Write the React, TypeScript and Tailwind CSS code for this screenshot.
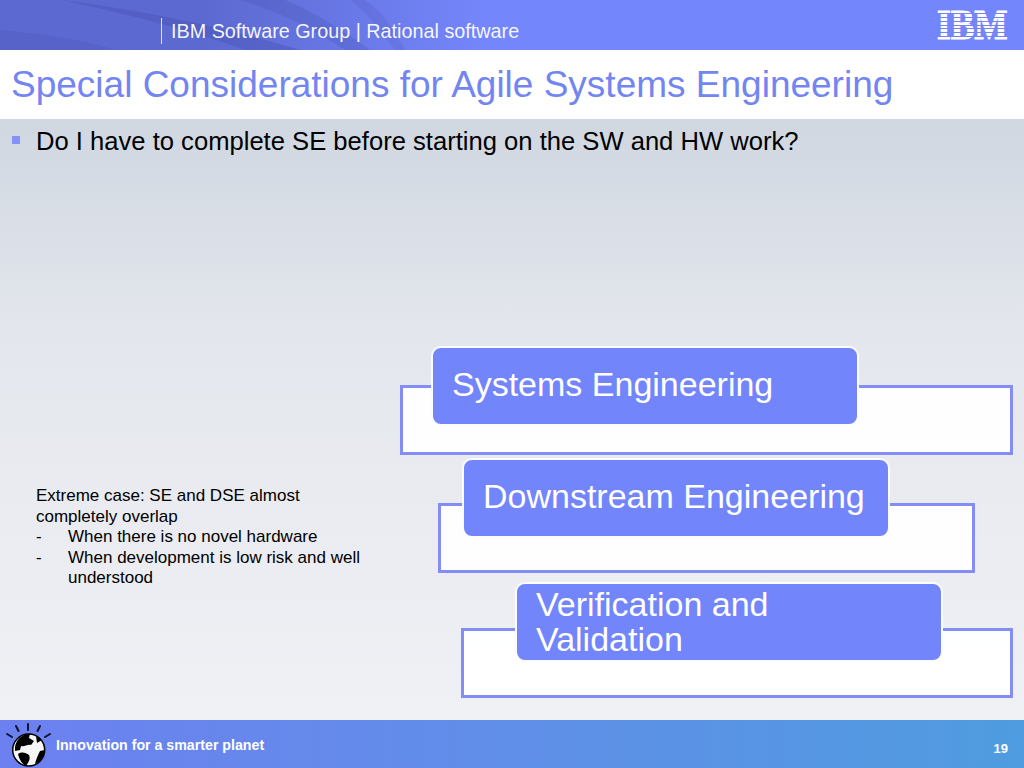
import React from "react";

const Section = ({ className, boxClassName, children }: { className: string; boxClassName: string; children: React.ReactNode }) => (
  <div className={`absolute ${className}`}>
    <div className={`absolute bg-white/95 border-[3px] border-[#838df5] ${boxClassName}`}></div>
    <div className="absolute left-0 top-0 w-[428px] h-[80px] rounded-[10px] border-[2px] border-[#fbfcfe] bg-[#7385fb] flex items-center pl-[19px] text-[34px] leading-[35px] text-white">
      {children}
    </div>
  </div>
);

const Globe = () => (
  <svg width="52" height="48" viewBox="0 0 52 48" className="absolute left-0 top-0">
    <g stroke="#0c1230" strokeWidth="2" strokeLinecap="round">
      <line x1="28" y1="4" x2="28" y2="10" />
      <line x1="16" y1="6" x2="18.5" y2="11" />
      <line x1="40" y1="6" x2="37.5" y2="11" />
      <line x1="7" y1="14" x2="12" y2="17" />
      <line x1="50" y1="14" x2="45" y2="17" />
    </g>
    <circle cx="28.7" cy="30" r="16" fill="#f6f6f6" stroke="#000" strokeWidth="1.5" />
    <path d="M15 27C16 20 22 14 30 13.5L29 18L34 21L31 25C27 24 25 27 21 26L20 30L15 31Z" fill="#000" />
    <path d="M18 34C22 31 26 33 29 35C31 39 28 43 26 46C22 44 19 39 18 34Z" fill="#000" />
    <path d="M36 16L42 20L37 23Z" fill="#000" />
    <path d="M40 31L45 30C44 37 40 42 35 44C36 39 38 35 40 31Z" fill="#000" />
  </svg>
);

const IbmLogo = () => (
  <div className="relative w-[70px] h-[30px] font-['Liberation_Serif',serif] font-bold text-white text-[43px] leading-[30px] whitespace-nowrap [-webkit-text-stroke:1px_white]">
    <span className="inline-block origin-left scale-x-[0.82]">IBM</span>
    <div className="absolute inset-0 flex flex-col justify-evenly">
      {[0, 1, 2, 3, 4, 5, 6].map((i) => (
        <div key={i} className="h-px bg-[#7385f5]"></div>
      ))}
    </div>
  </div>
);

export default function App() {
  return (
    <div className="w-[1024px] h-[768px] overflow-hidden flex flex-col font-['Liberation_Sans',Arial,sans-serif]">
      <header className="relative h-[50px] shrink-0 bg-gradient-to-r from-[#5c69d0] from-[20%] to-[#7486fb] to-[47%]">
        <svg width="480" height="50" viewBox="0 0 480 50" className="absolute left-0 top-0">
          <path d="M60 0C130 8 230 28 300 50L245 50C190 30 120 12 60 0Z" fill="#4a55b4" fillOpacity="0.45" />
          <path d="M240 0C270 8 315 30 345 50L370 50C340 28 310 10 285 0Z" fill="#4a55b4" fillOpacity="0.3" />
          <path d="M350 0C365 10 380 30 395 50L405 50C395 30 380 10 365 0Z" fill="#4a55b4" fillOpacity="0.2" />
          <path d="M0 30C50 34 90 42 115 50L0 50Z" fill="#4a55b4" fillOpacity="0.25" />
        </svg>
        <div className="relative h-full flex items-center justify-between pr-[17px]">
          <div className="ml-[161px] mt-[12px] flex items-center">
            <div className="w-px h-[26px] bg-white/80 mr-[9px]"></div>
            <span className="text-[19.8px] leading-[22px] text-white/95">IBM Software Group | Rational software</span>
          </div>
          <IbmLogo />
        </div>
      </header>

      <div className="h-[69px] shrink-0 bg-white flex items-center pl-[11px]">
        <h1 className="text-[37px] leading-[42px] text-[#7385f0]">Special Considerations for Agile Systems Engineering</h1>
      </div>

      <main className="relative flex-1 bg-gradient-to-b from-[#d0d7e1] via-[#e4e7ed] via-[37%] to-[#f0f1f5]">
        <div className="flex items-center pl-[12px] pt-[6px]">
          <div className="w-[8px] h-[8px] bg-[#8292f8] mr-[16px] -mt-[2px]"></div>
          <p className="text-[25.6px] leading-[32px] text-black">Do I have to complete SE before starting on the SW and HW work?</p>
        </div>

        <div className="ml-[36px] mt-[329px] w-[340px] text-[17px] leading-[20.5px] text-black">
          <p>Extreme case: SE and DSE almost completely overlap</p>
          <ul>
            <li className="flex"><span className="w-[32px] shrink-0">-</span><span>When there is no novel hardware</span></li>
            <li className="flex"><span className="w-[32px] shrink-0">-</span><span>When development is low risk and well understood</span></li>
          </ul>
        </div>

        <Section className="left-[431px] top-[227px] w-[582px] h-[109px]" boxClassName="-left-[31px] top-[39px] w-[613px] h-[70px]">
          <span className="-mt-[3px]">Systems Engineering</span>
        </Section>
        <Section className="left-[462px] top-[339px] w-[512px] h-[115px]" boxClassName="-left-[24px] top-[45px] w-[537px] h-[70px]">
          <span className="-mt-[3px]">Downstream Engineering</span>
        </Section>
        <Section className="left-[515px] top-[463px] w-[498px] h-[116px]" boxClassName="-left-[54px] top-[46px] w-[552px] h-[70px]">
          <span>Verification and<br />Validation</span>
        </Section>
      </main>

      <footer className="relative h-[48px] shrink-0 bg-gradient-to-r from-[#6c80f0] to-[#4f9ce0] flex items-center justify-between pl-[56px] pr-[16px] text-white font-bold">
        <Globe />
        <span className="text-[14.2px] mt-[3px]">Innovation for a smarter planet</span>
        <span className="text-[13px] mt-[9px]">19</span>
      </footer>
    </div>
  );
}
